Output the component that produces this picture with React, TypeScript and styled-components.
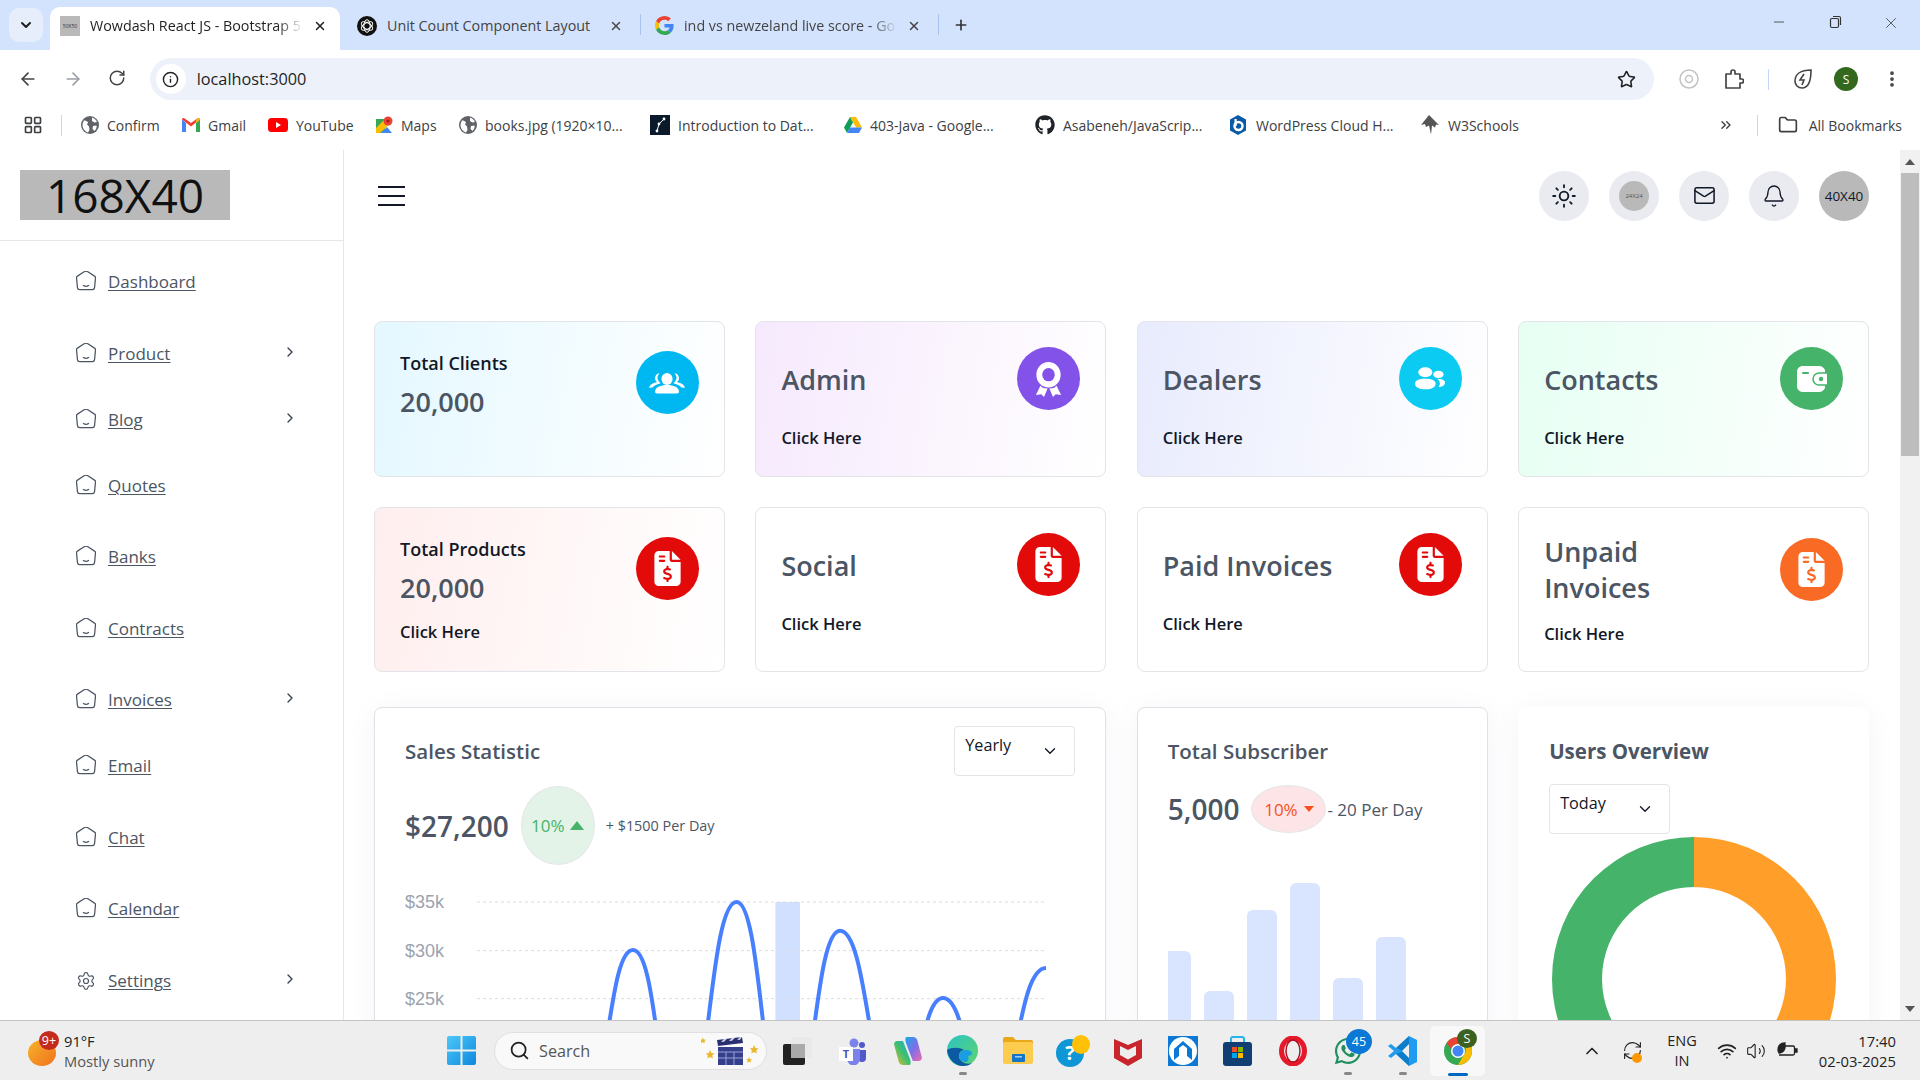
import React from "react";
import styled, { createGlobalStyle } from "styled-components";
import {
  ArrowLeft, ArrowRight, RotateCw, Info, Star, EllipsisVertical, Folder, ChevronDown, ChevronRight,
  ChevronUp, Sun, Mail, Bell, Search, Wifi, Volume2, Plus, X, Minus, Settings, LayoutGrid, ChevronsRight, RefreshCw,
} from "lucide-react";
import { FaFileInvoiceDollar, FaGithub, FaWhatsapp } from "react-icons/fa6";

const FONT = `"Open Sans", "Noto Sans", sans-serif`;

const GlobalStyle = createGlobalStyle`
  html, body { margin: 0; padding: 0; height: 100%; overflow: hidden; background: #fff; }
  body { font-family: ${FONT}; color: #4b5563; }
  * { box-sizing: border-box; }
`;

const Screen = styled.div`
  width: 1920px;
  height: 1080px;
  display: flex;
  flex-direction: column;
  overflow: hidden;
`;

// browser chrome
const TabStrip = styled.div`
  height: 50px;
  background: #d3e3fd;
  display: flex;
  align-items: flex-end;
  padding-left: 9px;
  color: #333;
`;

const TabSearch = styled.div`
  width: 34px;
  height: 34px;
  margin: 0 7px 8px 0;
  border-radius: 10px;
  background: #e6eefb;
  display: flex;
  align-items: center;
  justify-content: center;
  color: #1f1f1f;
`;

const Tab = styled.div<{ $w: number; $active?: boolean; $pl: number }>`
  width: ${(p) => p.$w}px;
  height: 43px;
  padding: 0 ${(p) => (p.$active ? 13 : 17)}px 6px ${(p) => p.$pl}px;
  display: flex;
  align-items: center;
  gap: 10px;
  background: ${(p) => (p.$active ? "#fff" : "transparent")};
  border-radius: 10px 10px 0 0;
  color: ${(p) => (p.$active ? "#1f1f1f" : "#444")};
`;

const TabTitle = styled.span<{ $fade?: boolean }>`
  flex: 1;
  min-width: 0;
  font-size: 14.3px;
  white-space: nowrap;
  overflow: hidden;
  ${(p) => (p.$fade ? "mask-image: linear-gradient(90deg, #000 88%, transparent 100%);" : "")}
`;

const TabDivider = styled.div`
  width: 1px;
  height: 21px;
  margin-bottom: 15px;
  background: #a8c3ee;
`;

const GrayFavicon = styled.div`
  width: 20px;
  height: 20px;
  flex: none;
  background: #b9b9b9;
  color: #333;
  font-size: 5px;
  display: flex;
  align-items: center;
  justify-content: center;
`;

const NewTab = styled.div`
  margin: 0 0 17px 14px;
  display: flex;
  color: #333;
`;

const WindowControls = styled.div`
  margin-left: auto;
  height: 50px;
  width: 166px;
  padding: 14px 20px 0 17px;
  display: flex;
  justify-content: space-between;
  color: #333;
`;

const Toolbar = styled.div`
  height: 50px;
  display: flex;
  align-items: center;
  padding: 8px 18px 0 18px;
  background: #fff;
  color: #444;
  border-radius: 10px 10px 0 0;
`;

const NavIcons = styled.div`
  width: 130px;
  display: flex;
  gap: 25px;
  color: #444;
`;

const AddressBar = styled.div`
  width: 1508px;
  height: 42px;
  margin-left: 2px;
  border-radius: 21px;
  background: #edf2fa;
  display: flex;
  align-items: center;
  padding: 0 18px 0 6px;
  color: #1f1f1f;
`;

const InfoCircle = styled.div`
  width: 30px;
  height: 30px;
  border-radius: 50%;
  background: #fff;
  display: flex;
  align-items: center;
  justify-content: center;
  margin-right: 11px;
`;

const Url = styled.span`
  font-size: 16.3px;
  flex: 1;
`;

const ToolIcons = styled.div`
  flex: 1;
  display: flex;
  align-items: center;
  padding-left: 25px;
  gap: 24px;
`;

const VSep = styled.div`
  width: 1px;
  height: 21px;
  background: #c4d7f5;
`;

const ProfileDot = styled.div`
  width: 24px;
  height: 24px;
  margin-left: -3px;
  border-radius: 50%;
  background: #33691e;
  color: #fff;
  font-size: 12px;
  display: flex;
  align-items: center;
  justify-content: center;
`;

const BookmarksBar = styled.div`
  height: 50px;
  display: flex;
  align-items: center;
  padding-left: 23px;
  background: #fff;
  color: #3c4043;
`;

const BarSep = styled(VSep)<{ $ml: number; $mr: number }>`
  margin: 0 ${(p) => p.$mr}px 0 ${(p) => p.$ml}px;
`;

const Bookmark = styled.div<{ $w: number }>`
  width: ${(p) => p.$w}px;
  display: flex;
  align-items: center;
  gap: 8px;
  font-size: 14px;
  white-space: nowrap;
  flex: none;
`;

const BookmarkEnd = styled.div`
  margin-left: auto;
  padding-right: 18px;
  display: flex;
  align-items: center;
  gap: 11px;
  font-size: 14px;
`;

// page
const Viewport = styled.div`
  height: 870px;
  display: flex;
  overflow: hidden;
`;

const Sidebar = styled.aside`
  width: 344px;
  flex: none;
  border-right: 1px solid #e5e7eb;
`;

const SideHead = styled.div`
  height: 91px;
  padding-left: 20px;
  display: flex;
  align-items: center;
  border-bottom: 1px solid #e5e7eb;
`;

const LogoBox = styled.div`
  width: 210px;
  height: 50px;
  background: #b9b9b9;
  color: #111;
  font-size: 46px;
  line-height: 50px;
  text-align: center;
`;

const NavList = styled.nav`
  padding: 8px 45px 0 76px;
`;

const NavRow = styled.a<{ $drop?: boolean }>`
  height: ${(p) => (p.$drop ? 66 : 71.5)}px;
  padding-top: 18px;
  display: flex;
  align-items: flex-start;
  gap: 12px;
  font-size: 17px;
  line-height: 30px;
  color: #4b5563;
  text-decoration: underline;
  text-underline-offset: 2px;
  text-decoration-thickness: 1px;
`;

const NavGlyph = styled.span`
  width: 20px;
  height: 20px;
  margin-top: 4px;
  display: flex;
  flex: none;
`;

const NavCaret = styled.span`
  margin: 5px 0 0 auto;
  display: flex;
  color: #374151;
`;

const Main = styled.main`
  flex: 1;
  min-width: 0;
  overflow: hidden;
`;

const TopBar = styled.header`
  height: 91px;
  padding: 0 31px 0 34px;
  display: flex;
  align-items: center;
  gap: 20px;
  color: #111827;
`;

const Burger = styled.svg`
  margin-right: auto;
`;

const RoundBtn = styled.div<{ $gray?: boolean }>`
  width: 50px;
  height: 50px;
  border-radius: 50%;
  background: ${(p) => (p.$gray ? "#b9b9b9" : "#e9ebf0")};
  color: #111827;
  display: flex;
  align-items: center;
  justify-content: center;
  font-size: 13.5px;
  font-weight: 500;
`;

const FlagThumb = styled.div`
  width: 30px;
  height: 30px;
  border-radius: 50%;
  background: #b9b9b9;
  color: #555;
  font-size: 6px;
  display: flex;
  align-items: center;
  justify-content: center;
`;

const Content = styled.div`
  padding: 80px 31px 0 30px;
`;

const CardGrid = styled.div`
  display: grid;
  grid-template-columns: repeat(4, 1fr);
  grid-template-rows: 156px 165px;
  column-gap: 30.5px;
  row-gap: 30px;
`;

const Card = styled.div<{ $tint?: string; $pt: number }>`
  border: 1px solid #e2e4e9;
  border-radius: 8px;
  padding: ${(p) => p.$pt}px 25px 0;
  background: ${(p) => (p.$tint ? `linear-gradient(100deg, ${p.$tint} 0%, #fff 100%)` : "#fff")};
`;

const CardTop = styled.div<{ $center?: boolean }>`
  display: flex;
  justify-content: space-between;
  align-items: ${(p) => (p.$center ? "center" : "flex-start")};
`;

const StatLabel = styled.div`
  font-size: 18px;
  line-height: 24px;
  font-weight: 600;
  color: #111827;
`;

const StatValue = styled.div`
  margin-top: 13px;
  font-size: 27px;
  line-height: 28px;
  font-weight: 600;
  color: #4b5563;
`;

const CardHeading = styled.h3`
  margin: 2px 0 0;
  max-width: 190px;
  font-size: 27px;
  line-height: 36px;
  font-weight: 600;
  color: #4b5563;
`;

const ClickHere = styled.div<{ $mt: number }>`
  margin-top: ${(p) => p.$mt}px;
  font-size: 16.5px;
  line-height: 24px;
  font-weight: 600;
  color: #111827;
`;

const IconDisc = styled.div<{ $bg: string }>`
  width: 63px;
  height: 63px;
  flex: none;
  border-radius: 50%;
  background: ${(p) => p.$bg};
  color: #fff;
  display: flex;
  align-items: center;
  justify-content: center;
`;

const LowerGrid = styled.div`
  margin-top: 35px;
  display: grid;
  grid-template-columns: repeat(4, 1fr);
  column-gap: 30.5px;
`;

const Panel = styled.section<{ $span?: number; $plain?: boolean }>`
  grid-column: span ${(p) => p.$span ?? 1};
  height: 460px;
  background: #fff;
  border: 1px solid ${(p) => (p.$plain ? "transparent" : "#dfe1e6")};
  border-radius: 8px;
  padding: 18px 30px 0;
  box-shadow: 0 4px 30px rgba(46, 45, 116, 0.05);
`;

const PanelHead = styled.div`
  min-height: 50px;
  display: flex;
  justify-content: space-between;
  align-items: center;
`;

const PanelTitle = styled.h6<{ $bold?: boolean }>`
  margin: 0;
  font-size: 20.5px;
  font-weight: ${(p) => (p.$bold ? 700 : 600)};
  color: #4b5563;
`;

const Select = styled.div`
  width: 121px;
  height: 50px;
  padding: 5px 15px 0 10px;
  border: 1px solid #e2e4e9;
  border-radius: 4px;
  background: #fff;
  display: flex;
  justify-content: space-between;
  font-size: 16.2px;
  line-height: 26px;
  color: #111827;
`;

const SelectRow = styled.div`
  margin-top: 8px;
`;

const Caret = styled.span`
  margin-top: 10px;
  display: flex;
  color: #111827;
`;

const KpiRow = styled.div<{ $mt: number }>`
  margin-top: ${(p) => p.$mt}px;
  display: flex;
  align-items: center;
`;

const KpiValue = styled.span`
  font-size: 28px;
  font-weight: 600;
  color: #4b5563;
`;

const Trend = styled.span<{ $w: number; $h: number; $bg: string; $fg: string }>`
  width: ${(p) => p.$w}px;
  height: ${(p) => p.$h}px;
  margin: 0 1px 0 12px;
  flex: none;
  border-radius: 50%;
  border: 1px solid #e4e6e8;
  background: ${(p) => p.$bg};
  color: ${(p) => p.$fg};
  font-size: 17px;
  display: flex;
  align-items: center;
  justify-content: center;
  gap: 6px;
`;

const Arrow = styled.i<{ $up?: boolean; $s: number; $c: string }>`
  width: 0;
  height: 0;
  border-left: ${(p) => p.$s}px solid transparent;
  border-right: ${(p) => p.$s}px solid transparent;
  border-${(p) => (p.$up ? "bottom" : "top")}: ${(p) => p.$s * 1.3}px solid ${(p) => p.$c};
`;

const KpiNote = styled.span<{ $size: number; $ml: number }>`
  margin-left: ${(p) => p.$ml}px;
  font-size: ${(p) => p.$size}px;
  white-space: nowrap;
  color: #4b5563;
`;

const ChartSvg = styled.svg<{ $mt: number }>`
  display: block;
  margin-top: ${(p) => p.$mt}px;
`;

const AxisLabel = styled.text`
  font-family: "Liberation Sans", Arial, sans-serif;
  font-size: 18px;
  fill: #9ca3af;
`;

const Donut = styled.svg`
  display: block;
  margin: 3px auto 0;
`;

const Scrollbar = styled.div`
  width: 20px;
  flex: none;
  background: #f1f1f1;
  padding: 0 1px;
  display: flex;
  flex-direction: column;
  align-items: center;
`;

const ScrollThumb = styled.div`
  width: 100%;
  height: 283px;
  margin-top: 8px;
  background: #bdbdbd;
`;

const ScrollArrow = styled.i<{ $up?: boolean }>`
  width: 0;
  height: 0;
  margin-top: ${(p) => (p.$up ? 9 : 0)}px;
  ${(p) => (p.$up ? "" : "margin: auto 0 8px;")}
  border-left: 5px solid transparent;
  border-right: 5px solid transparent;
  border-${(p) => (p.$up ? "bottom" : "top")}: 6px solid #555;
`;

// taskbar
const Taskbar = styled.footer`
  height: 60px;
  flex: none;
  background: #eee;
  border-top: 1px solid #c4c4c4;
  display: flex;
  align-items: center;
  position: relative;
  color: #222;
`;

const Weather = styled.div`
  width: 447px;
  flex: none;
  padding-left: 28px;
  display: flex;
  align-items: center;
  gap: 8px;
`;

const WeatherIcon = styled.div`
  position: relative;
  width: 28px;
  height: 26px;
  margin-top: 4px;
  border-radius: 50%;
  background: linear-gradient(135deg, #f6b42a, #f1701e);
`;

const CountBadge = styled.span<{ $bg: string; $top: number; $left: number; $w: number }>`
  position: absolute;
  top: ${(p) => p.$top}px;
  left: ${(p) => p.$left}px;
  width: ${(p) => p.$w}px;
  height: ${(p) => p.$w - 1}px;
  border-radius: 50%;
  background: ${(p) => p.$bg};
  color: #fff;
  font-size: 12.5px;
  display: flex;
  align-items: center;
  justify-content: center;
`;

const WeatherText = styled.div`
  font-size: 14.7px;
  line-height: 20px;
  color: #222;
  small { display: block; font-size: 14.7px; color: #555; }
`;

const StartWrap = styled.div`
  width: 47px;
  flex: none;
  display: flex;
`;

const SearchBox = styled.div`
  width: 273px;
  height: 38px;
  flex: none;
  margin-right: 3px;
  padding: 0 7px 0 14px;
  border: 1px solid #e0e0e0;
  border-radius: 19px;
  background: #f9f9f9;
  display: flex;
  align-items: center;
  gap: 9px;
  font-size: 16.2px;
  color: #555;
  span { flex: 1; }
`;

const Slot = styled.div<{ $active?: boolean }>`
  position: relative;
  width: 55px;
  height: 50px;
  flex: none;
  display: flex;
  align-items: center;
  justify-content: center;
  border-radius: 5px;
  background: ${(p) => (p.$active ? "#f8f8f8" : "transparent")};
`;

const RunDot = styled.i<{ $active?: boolean }>`
  position: absolute;
  bottom: ${(p) => (p.$active ? 0 : 1)}px;
  left: 50%;
  transform: translateX(-50%);
  width: ${(p) => (p.$active ? 20 : 8)}px;
  height: 3px;
  border-radius: 2px;
  background: ${(p) => (p.$active ? "#0067c0" : "#888")};
`;

const Tray = styled.div`
  margin-left: auto;
  padding-right: 24px;
  display: flex;
  align-items: center;
  color: #222;
`;

const TrayIcon = styled.span<{ $w: number }>`
  position: relative;
  width: ${(p) => p.$w}px;
  display: flex;
  justify-content: center;
`;

const SyncDot = styled.i`
  position: absolute;
  width: 10px;
  height: 10px;
  right: 10px;
  bottom: -2px;
  border-radius: 50%;
  background: #ff9800;
`;

const TrayText = styled.div<{ $w: number; $right?: boolean; $size: number }>`
  width: ${(p) => p.$w}px;
  font-size: ${(p) => p.$size}px;
  line-height: 20px;
  text-align: ${(p) => (p.$right ? "right" : "center")};
`;

// drawn icons
const HomeSmile = () => (
  <svg width="20" height="20" viewBox="0.4 0.3 19.2 19.2" fill="none" stroke="#4b5563" strokeWidth="1.2">
    <path d="M8.2 1.1 1.8 5.2c-.7.4-1 1.1-.9 1.900l.9 9.200c.1 1 1 1.900 2.100 1.900h12.200c1.100 0 2-.9 2.100-1.900l.9-9.200c.1-.8-.2-1.500-.9-1.900l-6.400-4.100c-1.100-.7-2.500-.7-3.600 0Z" />
    <path d="M7.500 14.200c1.500 1 3.500 1 5 0" strokeLinecap="round" />
  </svg>
);

const ThreeUsers = () => (
  <svg width="36" height="24" viewBox="0 0 36 30" preserveAspectRatio="none" fill="currentColor">
    <ellipse cx="18" cy="10" rx="5.6" ry="7.4" />
    <path d="M6 26c0-6 6-8.500 12-8.500S30 20 30 26c0 1.500-1 2-2 2H8c-1 0-2-.5-2-2Z" />
    <path d="M10.500 2.500C7.500 3.500 6 6 6 9c0 2 .8 3.600 2.200 4.800L5 15c-2.600 1-4.400 3-5 6l3.600-.5c1-1.700 2.400-3 5-4l3-1.200C9.500 13 8.500 11 8.500 8.500c0-2 .8-4 2-6ZM25.500 2.500c3 1 4.500 3.500 4.500 6.500 0 2-.8 3.600-2.200 4.800L31 15c2.600 1 4.400 3 5 6l-3.600-.5c-1-1.700-2.400-3-5-4l-3-1.200c2.100-2.300 3.100-4.300 3.100-6.800 0-2-.8-4-2-6Z" />
  </svg>
);

const Medal = () => (
  <svg width="27" height="36" viewBox="0 0 30 38" preserveAspectRatio="none" fill="currentColor">
    <circle cx="15" cy="14.500" r="13.500" />
    <circle cx="15" cy="14.500" r="7" fill="#8252e9" />
    <path d="M6 26 1 36l6-.8 3 2.800 4-9-5-.5ZM24 26l5 10-6-.8-3 2.800-4-9 5-.5Z" />
  </svg>
);

const TwoUsers = () => (
  <svg width="30" height="24" viewBox="0 0 32 36" preserveAspectRatio="none" fill="currentColor">
    <circle cx="11" cy="8" r="7.500" />
    <circle cx="25" cy="11" r="5.500" />
    <path d="M0 25c0-5 4-7.500 11-7.500s11 2.500 11 7.500-4 8.500-11 8.500S0 30 0 25Z" />
    <path d="M24 18c4.500-.5 8 1.500 8 5.500 0 3.500-2.500 6-7 6.500 1-1.500 1.500-3.300 1.500-5.200 0-2.800-1-5-2.500-6.800Z" />
  </svg>
);

const Wallet = () => (
  <svg width="30" height="26" viewBox="0 0 30 26">
    <path d="M6 0h16c3 0 5 2 6 4v18c-1 2-3 4-6 4H6c-3.500 0-6-2.500-6-6V6c0-3.500 2.500-6 6-6Z" fill="#fff" />
    <path d="M30 7h-8a6 6 0 0 0 0 12h8" fill="#fff" stroke="#45b369" strokeWidth="1.500" />
    <circle cx="24" cy="13" r="2.200" fill="#45b369" />
    <rect x="5" y="6" width="7" height="2" rx="1" fill="#45b369" />
  </svg>
);

const GoogleG = () => (
  <svg width="19" height="19" viewBox="0 0 48 48">
    <path fill="#EA4335" d="M24 9.500c3.540 0 6.710 1.220 9.210 3.600l6.850-6.850C35.900 2.380 30.470 0 24 0 14.620 0 6.510 5.380 2.560 13.220l7.980 6.190C12.430 13.720 17.740 9.500 24 9.500z" />
    <path fill="#4285F4" d="M46.980 24.550c0-1.570-.15-3.090-.38-4.550H24v9.020h12.940c-.58 2.960-2.260 5.480-4.780 7.180l7.730 6c4.510-4.180 7.090-10.360 7.090-17.650z" />
    <path fill="#FBBC05" d="M10.530 28.590c-.48-1.450-.76-2.990-.76-4.590s.27-3.140.76-4.590l-7.980-6.190C.92 16.460 0 20.120 0 24c0 3.880.92 7.540 2.560 10.780l7.970-6.190z" />
    <path fill="#34A853" d="M24 48c6.480 0 11.930-2.130 15.890-5.810l-7.730-6c-2.150 1.450-4.920 2.300-8.160 2.300-6.260 0-11.570-4.220-13.470-9.910l-7.980 6.190C6.510 42.620 14.620 48 24 48z" />
  </svg>
);

const ChatGptMark = () => (
  <svg width="20" height="20" viewBox="0 0 20 20">
    <circle cx="10" cy="10" r="10" fill="#111" />
    <g fill="none" stroke="#fff" strokeWidth="1">
      <ellipse cx="10" cy="10" rx="3.200" ry="6.300" />
      <ellipse cx="10" cy="10" rx="3.200" ry="6.300" transform="rotate(60 10 10)" />
      <ellipse cx="10" cy="10" rx="3.200" ry="6.300" transform="rotate(120 10 10)" />
    </g>
  </svg>
);

const GlobeFill = () => (
  <svg width="18" height="18" viewBox="0 0 18 18">
    <circle cx="9" cy="9" r="9" fill="#5f6368" />
    <path d="M3 4.500c1.500 0 3 .5 4 2l-1 2 2 2 .5 3.500-1.500 2.500C4 15.500 1.500 12.500 1.500 9c0-1.500.5-3 1.500-4.500ZM11 1.500c2.500.7 4 2.200 5 4.500l-2.500.5L11 5ZM12 10l3.500-.5c.5 2-.5 4-2 5.500L11.500 13Z" fill="#fff" />
  </svg>
);

const GmailMark = () => (
  <svg width="18" height="14" viewBox="0 0 18 14">
    <path d="M0 1.500V14h4V5Z" fill="#4285f4" />
    <path d="M18 1.500V14h-4V5Z" fill="#34a853" />
    <path d="M0 1.500C0 0 1.500-.5 2.800.4L9 5l6.200-4.600C16.500-.5 18 0 18 1.500L9 8.500Z" fill="#ea4335" />
    <path d="M14 2.500l1.200-2.100C16.500-.5 18 0 18 1.500L14 5Z" fill="#fbbc04" />
  </svg>
);

const YouTubeMark = () => (
  <svg width="20" height="14" viewBox="0 0 20 14">
    <rect width="20" height="14" rx="3.500" fill="#f00" />
    <path d="M8 4l5 3-5 3Z" fill="#fff" />
  </svg>
);

const MapsMark = () => (
  <svg width="18" height="18" viewBox="0 0 18 18">
    <path d="M1 3h9v14H1Z" fill="#34a853" />
    <path d="M1 12 10 3h7v3L5 17H1Z" fill="#fbbc04" />
    <path d="M6 17l6-6 5 6Z" fill="#4285f4" />
    <circle cx="13" cy="5" r="4.500" fill="#ea4335" />
    <circle cx="13" cy="5" r="1.500" fill="#9c1f14" />
  </svg>
);

const GraphMark = () => (
  <svg width="20" height="20" viewBox="0 0 20 20">
    <rect width="20" height="20" fill="#0a1a2b" />
    <path d="M7 16l2-7 5-5" stroke="#fff" strokeWidth="1" fill="none" />
    <circle cx="7" cy="16" r="1.400" fill="#fff" />
    <circle cx="9" cy="9" r="1.400" fill="#fff" />
    <circle cx="14" cy="4" r="1.400" fill="#fff" />
  </svg>
);

const DriveMark = () => (
  <svg width="18" height="16" viewBox="0 0 18 16">
    <path d="M6 0h6l6 10.500h-6Z" fill="#fbbc04" />
    <path d="M6 0 0 10.500 3 16l6-10.500Z" fill="#0f9d58" />
    <path d="M3 16h12l3-5.500H6Z" fill="#4285f4" />
  </svg>
);

const WpMark = () => (
  <svg width="20" height="20" viewBox="0 0 20 20">
    <path d="M10 0 18 4.500v11L10 20l-8-4.500v-11Z" fill="#0a5aa5" />
    <circle cx="10.500" cy="11" r="4" fill="none" stroke="#fff" strokeWidth="2.500" />
    <rect x="6.500" y="4" width="2.200" height="7" fill="#fff" />
  </svg>
);

const W3Mark = () => (
  <svg width="20" height="20" viewBox="0 0 20 20">
    <path d="M9 0l5 5 5 5-3-.5-1 3-3-2-1 9-2-9-3 1.500L5 9 1 10l4-5Z" fill="#555" />
  </svg>
);

const ExtensionMark = () => (
  <svg width="21" height="21" viewBox="0 0 21 21" fill="none" stroke="#444" strokeWidth="1.700" strokeLinejoin="round">
    <path d="M3 5h5V3a2 2 0 0 1 4 0v2h5v5h1.500a2 2 0 0 1 0 4H17v5H3Z" />
  </svg>
);

const WindowsMark = () => (
  <svg width="29" height="29" viewBox="0 0 29 29">
    <defs>
      <linearGradient id="winA" x1="0" y1="0" x2="1" y2="1">
        <stop offset="0" stopColor="#4cc8fb" />
        <stop offset="1" stopColor="#0f87dc" />
      </linearGradient>
    </defs>
    <path d="M0 2a2 2 0 0 1 2-2h11.500v13.500H0ZM15.500 0H27a2 2 0 0 1 2 2v11.500H15.500ZM0 15.500h13.500V29H2a2 2 0 0 1-2-2ZM15.500 15.500H29V27a2 2 0 0 1-2 2H15.500Z" fill="url(#winA)" />
  </svg>
);

const Clapper = () => (
  <svg width="58" height="28" viewBox="0 0 58 28">
    <g fill="#eab830">
      <path d="M4 2l1.500 3 3 .5-2.200 2 .6 3L4 9 1.300 10.500l.6-3L0 5.500l3-.5Z" transform="translate(-1 -1) scale(.7)" />
      <path d="M8 10l1.500 3 3 .5-2.200 2 .6 3L8 17l-2.700 1.500.6-3-2-2 3-.5Z" transform="translate(1 3)" />
      <path d="M52 10l1.500 3 3 .5-2.200 2 .6 3-2.900-1.500-2.700 1.500.6-3-2-2 3-.5Z" transform="translate(1 -2)" />
      <path d="M48 20l1 2 2 .4-1.500 1.400.4 2-1.900-1-1.800 1 .4-2-1.400-1.400 2-.4Z" />
    </g>
    <path d="M16 3 41 0l1 6-25 3Z" fill="#2a2f72" />
    <path d="M20 5l3-3 3-.3-3 3ZM28 4l3-3 3-.3-3 3ZM36 3l3-3 2-.2-2 3Z" fill="#d8d8e8" />
    <rect x="17" y="10" width="25" height="18" fill="#34408c" />
    <path d="M17 15h25M17 21h25M25 15v13M33 15v13" stroke="#9aa2d8" strokeWidth="1" />
  </svg>
);

const SnipMark = () => (
  <svg width="30" height="28" viewBox="0 0 30 28">
    <rect x="0" y="7" width="22" height="21" rx="2" fill="#222" />
    <rect x="8" y="0" width="21" height="21" rx="2" fill="#e8e8e8" fillOpacity=".9" />
    <rect x="8" y="7" width="14" height="14" fill="#aaa" />
  </svg>
);

const TeamsMark = () => (
  <svg width="27" height="28" viewBox="0 0 27 28">
    <circle cx="15" cy="6" r="4.500" fill="#7b83eb" />
    <circle cx="23" cy="8" r="3" fill="#5059c9" />
    <path d="M19 13h8v8a4 4 0 0 1-8 0Z" fill="#5059c9" />
    <path d="M8 12h13v10a6 6 0 0 1-13 0Z" fill="#7b83eb" />
    <rect x="0" y="10" width="14" height="14" fill="#fff" />
    <text x="7" y="21" textAnchor="middle" fontSize="11" fontWeight="700" fill="#4b53bc" fontFamily="Open Sans">T</text>
  </svg>
);

const CopilotMark = () => (
  <svg width="28" height="28" viewBox="0 0 28 28">
    <defs>
      <linearGradient id="copA" x1="0" y1="0" x2="1" y2="1">
        <stop offset="0" stopColor="#1ba9e8" />
        <stop offset=".5" stopColor="#7d6fe8" />
        <stop offset="1" stopColor="#ef6bb0" />
      </linearGradient>
      <linearGradient id="copB" x1="0" y1="1" x2="1" y2="0">
        <stop offset="0" stopColor="#f4b62a" />
        <stop offset=".5" stopColor="#3fc06f" />
        <stop offset="1" stopColor="#1ba9e8" />
      </linearGradient>
    </defs>
    <path d="M12 0h7c2 0 3.500 1 4.200 3l4.600 17c.5 2-1 4-3 4h-6L12 6c-.7-2-1-4 0-6Z" fill="url(#copA)" />
    <path d="M16 28H9c-2 0-3.500-1-4.200-3L.2 8C-.3 6 1 4 3 4h6l7 18c.7 2 1 4 0 6Z" fill="url(#copB)" />
  </svg>
);

const EdgeMark = () => (
  <svg width="31" height="31" viewBox="0 0 31 31">
    <defs>
      <linearGradient id="edgeA" x1="0" y1="0" x2="1" y2="1">
        <stop offset="0" stopColor="#2bc4c4" />
        <stop offset="1" stopColor="#5ed36b" />
      </linearGradient>
    </defs>
    <circle cx="15.500" cy="15.500" r="15.500" fill="url(#edgeA)" />
    <path d="M0 15C1 24 8 31 16 31c4 0 7-1 9-3-6 2-12-1-13-6-.5-3 1-6 5-7-4-3-13-3-17 0Z" fill="#0c59a4" />
    <path d="M12 22c0-4 3-7 7-7 4 0 6 2 6 3 0 2-2 3-4 3 2 4-1 6-3 6-4-1-6-3-6-5Z" fill="#1b9de2" />
  </svg>
);

const ExplorerMark = () => (
  <svg width="30" height="27" viewBox="0 0 30 27">
    <path d="M0 2a2 2 0 0 1 2-2h8l3 3h15a2 2 0 0 1 2 2v4H0Z" fill="#e8a81a" />
    <rect y="5" width="30" height="22" rx="2" fill="#fdcb4d" />
    <rect x="9" y="17" width="13" height="8" rx="1" fill="#1475c8" />
    <rect x="12" y="19" width="7" height="1.500" fill="#9fd0f5" />
  </svg>
);

const HelpMark = () => (
  <svg width="34" height="32" viewBox="0 0 34 32">
    <circle cx="14" cy="18" r="14" fill="#0f96d6" />
    <text x="14" y="25" textAnchor="middle" fontSize="20" fontWeight="700" fill="#fff" fontFamily="Open Sans">?</text>
    <ellipse cx="25" cy="9.500" rx="9" ry="9.500" fill="#ffc107" />
  </svg>
);

const McAfeeMark = () => (
  <svg width="28" height="30" viewBox="0 0 28 30">
    <path d="M0 3 14 9 28 3v19L14 30 0 22Z" fill="#c8252c" />
    <path d="M6 10l8 4 8-4v9l-8 4.500L6 19Z" fill="#eee" />
  </svg>
);

const BlueSquareMark = () => (
  <svg width="30" height="30" viewBox="0 0 30 30">
    <rect width="30" height="30" fill="#0a78d4" />
    <circle cx="15" cy="15" r="14" fill="#fff" />
    <path d="M6 24V13L15 5l9 8v11l-5-4V12l-4-3-4 3v8Z" fill="#0a78d4" />
  </svg>
);

const StoreMark = () => (
  <svg width="29" height="30" viewBox="0 0 29 30">
    <path d="M8 6V3c0-1 1-2 2-2h9c1 0 2 1 2 2v3" fill="none" stroke="#25b5e8" strokeWidth="2" />
    <rect y="6" width="29" height="24" rx="3" fill="#123f73" />
    <rect x="9" y="11" width="5" height="5" fill="#f25022" />
    <rect x="15" y="11" width="5" height="5" fill="#7fba00" />
    <rect x="9" y="17" width="5" height="5" fill="#00a4ef" />
    <rect x="15" y="17" width="5" height="5" fill="#ffb900" />
  </svg>
);

const OperaMark = () => (
  <svg width="28" height="30" viewBox="0 0 28 30">
    <ellipse cx="14" cy="15" rx="11.500" ry="13" fill="none" stroke="#e6192b" strokeWidth="5" />
    <ellipse cx="14" cy="15" rx="7" ry="11" fill="none" stroke="#b01020" strokeWidth="1.500" />
  </svg>
);

const VsCodeMark = () => (
  <svg width="29" height="30" viewBox="0 0 29 30">
    <path d="M21 0 29 4v22l-8 4L8 18l-5 4-3-2 6-5-6-5 3-2 5 4Z" fill="#1f9cf0" />
    <path d="M21 0v30L8 18l7-3-7-3Z" fill="#0065a9" opacity=".55" />
    <path d="M21 8v14l-7-7Z" fill="#eee" />
  </svg>
);

const ChromeMark = () => (
  <svg width="28" height="28" viewBox="0 0 28 28">
    <circle cx="14" cy="14" r="14" fill="#34a853" />
    <path d="M14 0a14 14 0 0 1 12.100 7H14a7 7 0 0 0-6.700 5L2.500 6A14 14 0 0 1 14 0Z" fill="#ea4335" />
    <path d="M26.100 7A14 14 0 0 1 14 28l6-10.500A7 7 0 0 0 19 7Z" fill="#fbbc04" />
    <circle cx="14" cy="14" r="7" fill="#fff" />
    <circle cx="14" cy="14" r="5.500" fill="#4285f4" />
  </svg>
);

const LeafBattery = () => (
  <svg width="22" height="18" viewBox="0 0 22 18" fill="none" stroke="#222" strokeWidth="1.300">
    <path d="M7 4h10a1.500 1.500 0 0 1 1.500 1.500v6A1.500 1.500 0 0 1 17 13H3" />
    <path d="M18.500 7H21v3h-2.500" fill="#222" />
    <path d="M9 1C4 1 2 4 2 8c0 1 .5 2 1 3 3 0 5-2 6-5Z" fill="#222" />
  </svg>
);

const invoice = <FaFileInvoiceDollar size={35} />;

const sideItems = [
  { label: "Dashboard" },
  { label: "Product", drop: true },
  { label: "Blog", drop: true },
  { label: "Quotes" },
  { label: "Banks" },
  { label: "Contracts" },
  { label: "Invoices", drop: true },
  { label: "Email" },
  { label: "Chat" },
  { label: "Calendar" },
  { label: "Settings", drop: true, gear: true },
];

const bookmarks = [
  { w: 101, icon: <GlobeFill />, label: "Confirm" },
  { w: 86, icon: <GmailMark />, label: "Gmail" },
  { w: 107, icon: <YouTubeMark />, label: "YouTube" },
  { w: 84, icon: <MapsMark />, label: "Maps" },
  { w: 191, icon: <GlobeFill />, label: "books.jpg (1920×10..." },
  { w: 194, icon: <GraphMark />, label: "Introduction to Dat..." },
  { w: 191, icon: <DriveMark />, label: "403-Java - Google..." },
  { w: 193, icon: <FaGithub size={20} color="#1f2328" />, label: "Asabeneh/JavaScrip..." },
  { w: 192, icon: <WpMark />, label: "WordPress Cloud H..." },
  { w: 120, icon: <W3Mark />, label: "W3Schools" },
];

const subscriberBars = [
  { x: -7, top: 72 },
  { x: 36, top: 112 },
  { x: 79, top: 31 },
  { x: 122, top: 4 },
  { x: 165, top: 99 },
  { x: 208, top: 58 },
];

const App = () => {
  return (
    <>
      <GlobalStyle />
      <Screen>
        <TabStrip>
          <TabSearch><ChevronDown size={16} strokeWidth={3} /></TabSearch>
          <Tab $w={290} $pl={10} $active>
            <GrayFavicon>50X50</GrayFavicon>
            <TabTitle $fade>Wowdash React JS - Bootstrap 5</TabTitle>
            <X size={14} strokeWidth={2.5} />
          </Tab>
          <Tab $w={300} $pl={17}>
            <ChatGptMark />
            <TabTitle>Unit Count Component Layout</TabTitle>
            <X size={14} strokeWidth={2.5} />
          </Tab>
          <TabDivider />
          <Tab $w={297} $pl={14}>
            <GoogleG />
            <TabTitle $fade>ind vs newzeland live score - Go</TabTitle>
            <X size={14} strokeWidth={2.5} />
          </Tab>
          <TabDivider />
          <NewTab><Plus size={16} strokeWidth={2.5} /></NewTab>
          <WindowControls>
            <Minus size={16} strokeWidth={1.2} />
            <svg width="16" height="16" viewBox="0 0 16 16" fill="none" stroke="#333" strokeWidth="1.2">
              <rect x="3.500" y="4.500" width="8" height="9" rx="1.500" />
              <path d="M6 2.500h6a1.500 1.500 0 0 1 1.500 1.500v7" />
            </svg>
            <X size={18} strokeWidth={1} />
          </WindowControls>
        </TabStrip>

        <Toolbar>
          <NavIcons>
            <ArrowLeft size={20} />
            <ArrowRight size={20} color="#9aa0a6" />
            <RotateCw size={18} />
          </NavIcons>
          <AddressBar>
            <InfoCircle><Info size={17} color="#222" /></InfoCircle>
            <Url>localhost:3000</Url>
            <Star size={19} strokeWidth={2} />
          </AddressBar>
          <ToolIcons>
            <svg width="20" height="20" viewBox="0 0 20 20" fill="none" stroke="#c4c4c4" strokeWidth="1.5">
              <circle cx="10" cy="10" r="9" />
              <circle cx="10" cy="10" r="3.500" />
            </svg>
            <ExtensionMark />
            <VSep />
            <svg width="20" height="22" viewBox="0 0 20 22" fill="none" stroke="#444" strokeWidth="1.6">
              <path d="M18 2C8 2 2 6 2 13c0 4 3 7 7 7 6 0 9-7 9-18Z" />
              <path d="M11 6 7 12h4l-2 5" />
            </svg>
            <ProfileDot>S</ProfileDot>
            <EllipsisVertical size={20} strokeWidth={2.5} />
          </ToolIcons>
        </Toolbar>

        <BookmarksBar>
          <LayoutGrid size={20} />
          <BarSep $ml={18} $mr={19} />
          {bookmarks.map((b) => (
            <Bookmark key={b.label} $w={b.w}>{b.icon}{b.label}</Bookmark>
          ))}
          <BookmarkEnd>
            <ChevronsRight size={16} />
            <BarSep $ml={12} $mr={9} />
            <Folder size={20} />
            All Bookmarks
          </BookmarkEnd>
        </BookmarksBar>

        <Viewport>
          <Sidebar>
            <SideHead><LogoBox>168X40</LogoBox></SideHead>
            <NavList>
              {sideItems.map((item) => (
                <NavRow key={item.label} $drop={item.drop}>
                  <NavGlyph>{item.gear ? <Settings size={22} strokeWidth={1.4} /> : <HomeSmile />}</NavGlyph>
                  {item.label}
                  {item.drop && <NavCaret><ChevronRight size={16} strokeWidth={2} /></NavCaret>}
                </NavRow>
              ))}
            </NavList>
          </Sidebar>

          <Main>
            <TopBar>
              <Burger width="27" height="20" viewBox="0 0 27 20" stroke="#111827" strokeWidth="2">
                <path d="M0 1h27M0 10h27M0 19h27" />
              </Burger>
              <RoundBtn><Sun size={26} strokeWidth={1.7} /></RoundBtn>
              <RoundBtn><FlagThumb>24X24</FlagThumb></RoundBtn>
              <RoundBtn><Mail size={23} strokeWidth={1.6} /></RoundBtn>
              <RoundBtn><Bell size={24} strokeWidth={1.3} /></RoundBtn>
              <RoundBtn $gray>40X40</RoundBtn>
            </TopBar>

            <Content>
              <CardGrid>
                <Card $tint="#e4f8ff" $pt={29}>
                  <CardTop>
                    <div>
                      <StatLabel>Total Clients</StatLabel>
                      <StatValue>20,000</StatValue>
                    </div>
                    <IconDisc $bg="#00b8f1"><ThreeUsers /></IconDisc>
                  </CardTop>
                </Card>
                <Card $tint="#f6e9fd" $pt={25}>
                  <CardTop $center>
                    <CardHeading>Admin</CardHeading>
                    <IconDisc $bg="#8252e9"><Medal /></IconDisc>
                  </CardTop>
                  <ClickHere $mt={16}>Click Here</ClickHere>
                </Card>
                <Card $tint="#e8ebfd" $pt={25}>
                  <CardTop $center>
                    <CardHeading>Dealers</CardHeading>
                    <IconDisc $bg="#0ccbf2"><TwoUsers /></IconDisc>
                  </CardTop>
                  <ClickHere $mt={16}>Click Here</ClickHere>
                </Card>
                <Card $tint="#e6fff3" $pt={25}>
                  <CardTop $center>
                    <CardHeading>Contacts</CardHeading>
                    <IconDisc $bg="#45b369"><Wallet /></IconDisc>
                  </CardTop>
                  <ClickHere $mt={16}>Click Here</ClickHere>
                </Card>
                <Card $tint="#ffeeee" $pt={29}>
                  <CardTop>
                    <div>
                      <StatLabel>Total Products</StatLabel>
                      <StatValue>20,000</StatValue>
                      <ClickHere $mt={18}>Click Here</ClickHere>
                    </div>
                    <IconDisc $bg="#e30a0a">{invoice}</IconDisc>
                  </CardTop>
                </Card>
                <Card $pt={25}>
                  <CardTop $center>
                    <CardHeading>Social</CardHeading>
                    <IconDisc $bg="#e30a0a">{invoice}</IconDisc>
                  </CardTop>
                  <ClickHere $mt={16}>Click Here</ClickHere>
                </Card>
                <Card $pt={25}>
                  <CardTop $center>
                    <CardHeading>Paid Invoices</CardHeading>
                    <IconDisc $bg="#e30a0a">{invoice}</IconDisc>
                  </CardTop>
                  <ClickHere $mt={16}>Click Here</ClickHere>
                </Card>
                <Card $pt={24}>
                  <CardTop $center>
                    <CardHeading>Unpaid Invoices</CardHeading>
                    <IconDisc $bg="#f96a24">{invoice}</IconDisc>
                  </CardTop>
                  <ClickHere $mt={16}>Click Here</ClickHere>
                </Card>
              </CardGrid>

              <LowerGrid>
                <Panel $span={2}>
                  <PanelHead>
                    <PanelTitle>Sales Statistic</PanelTitle>
                    <Select>Yearly<Caret><ChevronDown size={18} strokeWidth={1.8} /></Caret></Select>
                  </PanelHead>
                  <KpiRow $mt={10}>
                    <KpiValue>$27,200</KpiValue>
                    <Trend $w={74} $h={79} $bg="#e3f3e8" $fg="#45b369">10%<Arrow $up $s={7} $c="#45b369" /></Trend>
                    <KpiNote $size={14.4} $ml={10}>+ $1500 Per Day</KpiNote>
                  </KpiRow>
                  <ChartSvg $mt={15} width="670" height="200" viewBox="0 0 670 200">
                    <rect x="370.4" y="22" width="24.6" height="178" fill="#d1e0ff" />
                    {[22, 70.7, 118.7].map((y) => (
                      <line key={y} x1="72" x2="639" y1={y} y2={y} stroke="#dcdcdc" strokeWidth="1" strokeDasharray="3 3" />
                    ))}
                    <AxisLabel x="0" y="28">$35k</AxisLabel>
                    <AxisLabel x="0" y="77">$30k</AxisLabel>
                    <AxisLabel x="0" y="125">$25k</AxisLabel>
                    <path
                      d="M179 225C204 225 203 70 228 70C253 70 252 245 277 245C304 245 304 22 331.6 22C357 22 357 245 383 245C409 245 409 50.7 435 50.7C463 50.7 464 225 492 225C515 225 515 118 538 118C562 118 563 225 587 225C612 225 612 88 641 88"
                      fill="none"
                      stroke="#487fff"
                      strokeWidth="4"
                    />
                  </ChartSvg>
                </Panel>

                <Panel>
                  <PanelHead><PanelTitle>Total Subscriber</PanelTitle></PanelHead>
                  <KpiRow $mt={9}>
                    <KpiValue>5,000</KpiValue>
                    <Trend $w={75} $h={48} $bg="#fde4e7" $fg="#f4511e">10%<Arrow $s={5} $c="#f4511e" /></Trend>
                    <KpiNote $size={17} $ml={0}>- 20 Per Day</KpiNote>
                  </KpiRow>
                  <ChartSvg $mt={46} width="240" height="170" viewBox="0 0 240 170">
                    {subscriberBars.map((b) => (
                      <rect key={b.x} x={b.x} y={b.top} width="30" height="200" rx="6" fill="#d9e5fe" />
                    ))}
                  </ChartSvg>
                </Panel>

                <Panel $plain>
                  <PanelHead><PanelTitle $bold>Users Overview</PanelTitle></PanelHead>
                  <SelectRow>
                    <Select>Today<Caret><ChevronDown size={18} strokeWidth={1.8} /></Caret></Select>
                  </SelectRow>
                  <Donut width="284" height="284" viewBox="0 0 284 284">
                    <path d="M142 0A142 142 0 0 1 142 284L142 234A92 92 0 0 0 142 50Z" fill="#ff9f29" />
                    <path d="M142 0A142 142 0 0 0 142 284L142 234A92 92 0 0 1 142 50Z" fill="#45b369" />
                  </Donut>
                </Panel>
              </LowerGrid>
            </Content>
          </Main>

          <Scrollbar>
            <ScrollArrow $up />
            <ScrollThumb />
            <ScrollArrow />
          </Scrollbar>
        </Viewport>

        <Taskbar>
          <Weather>
            <WeatherIcon>
              <CountBadge $bg="#c42b1c" $top={-9} $left={11} $w={20}>9+</CountBadge>
            </WeatherIcon>
            <WeatherText>91°F<small>Mostly sunny</small></WeatherText>
          </Weather>
          <StartWrap><WindowsMark /></StartWrap>
          <SearchBox>
            <Search size={21} color="#222" strokeWidth={2} />
            <span>Search</span>
            <Clapper />
          </SearchBox>
          <Slot><SnipMark /></Slot>
          <Slot><TeamsMark /></Slot>
          <Slot><CopilotMark /></Slot>
          <Slot><EdgeMark /><RunDot /></Slot>
          <Slot><ExplorerMark /></Slot>
          <Slot><HelpMark /></Slot>
          <Slot><McAfeeMark /></Slot>
          <Slot><BlueSquareMark /></Slot>
          <Slot><StoreMark /></Slot>
          <Slot><OperaMark /></Slot>
          <Slot>
            <FaWhatsapp size={30} color="#1f8f5f" />
            <CountBadge $bg="#0a78d4" $top={3} $left={26} $w={26}>45</CountBadge>
            <RunDot />
          </Slot>
          <Slot><VsCodeMark /><RunDot /></Slot>
          <Slot $active>
            <ChromeMark />
            <CountBadge $bg="#3d6220" $top={3} $left={27} $w={20}>S</CountBadge>
            <RunDot $active />
          </Slot>
          <Tray>
            <TrayIcon $w={40}><ChevronUp size={20} /></TrayIcon>
            <TrayIcon $w={40}><RefreshCw size={21} strokeWidth={1.3} /><SyncDot /></TrayIcon>
            <TrayText $w={60} $size={14.5}>ENG<br />IN</TrayText>
            <TrayIcon $w={30}><Wifi size={20} /></TrayIcon>
            <TrayIcon $w={28}><Volume2 size={20} strokeWidth={1.3} /></TrayIcon>
            <TrayIcon $w={34}><LeafBattery /></TrayIcon>
            <TrayText $w={92} $right $size={14.8}>17:40<br />02-03-2025</TrayText>
          </Tray>
        </Taskbar>
      </Screen>
    </>
  );
};

export default App;
